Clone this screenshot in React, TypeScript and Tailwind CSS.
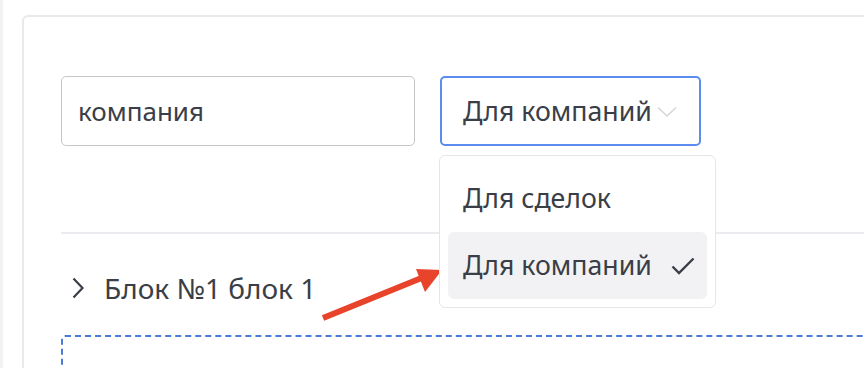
import React from "react";

export default function App() {
  const font = { fontFamily: "'Noto Sans', Roboto, sans-serif" };
  return (
    <div className="relative flex h-[368px] w-[864px] overflow-hidden bg-white text-[#3a3e46]" style={font}>
      <div className="w-[3px] shrink-0 bg-[#f2f2f2]" />
      <div className="flex-1 pl-[19px] pt-[15px]">
        <div className="h-[420px] w-[900px] rounded-md border-2 border-[#e9e9e9] pl-[37px] pt-[59px]">
          <div className="flex items-start gap-[25px]">
            <div className="flex h-[70px] w-[354px] items-center rounded-[5px] border-[1.5px] border-[#c6c6c6] pl-[16px] text-[26px]">
              компания
            </div>
            <div className="relative">
              <div className="flex h-[70px] w-[261px] items-center rounded-[5px] border-2 border-[#5b8def] pl-[21px] text-[26.7px]">
                <span>Для компаний</span>
                <svg className="ml-[5px] mt-[2px]" width="20" height="12" viewBox="0 0 20 12" fill="none">
                  <path d="M1 1.5 L10 10 L19 1.5" stroke="#d6d6d8" strokeWidth="1.5" />
                </svg>
              </div>
              <div className="absolute left-[-1px] top-[79px] z-10 w-[277px] rounded-md border-[1.5px] border-[#e6e6e8] bg-white p-2 text-[26.7px]">
                <div className="flex h-[68px] items-center px-[15px]">Для сделок</div>
                <div className="flex h-[67px] items-center justify-between rounded-md bg-[#f2f2f4] pl-[15px] pr-[12px]">
                  <span>Для компаний</span>
                  <svg width="24" height="18" viewBox="0 0 24 18" fill="none">
                    <path d="M1.5 9.5 L8 16 L22.5 1.5" stroke="#3a3e46" strokeWidth="2.4" />
                  </svg>
                </div>
              </div>
            </div>
          </div>
          <div className="mt-[86px] h-[2px] bg-[#ececf0]" />
          <div className="mt-[34px] flex h-[40px] items-center pl-[11px] text-[28px]">
            <svg width="12" height="22" viewBox="0 0 12 22" fill="none">
              <path d="M1.5 1.5 L10.5 11 L1.5 20.5" stroke="#3a3e46" strokeWidth="2.2" />
            </svg>
            <span className="ml-[20px]">Блок №1 блок 1</span>
          </div>
          <div className="mt-[27px] h-[100px] rounded-sm border-2 border-dashed border-[#4a7bd8]" />
        </div>
      </div>
      <svg className="absolute left-0 top-0" width="864" height="368" viewBox="0 0 864 368" fill="none">
        <line x1="323" y1="318" x2="424" y2="277" stroke="#e8432b" strokeWidth="6" />
        <polygon points="442,270 416,269 425,292" fill="#e8432b" />
      </svg>
    </div>
  );
}
